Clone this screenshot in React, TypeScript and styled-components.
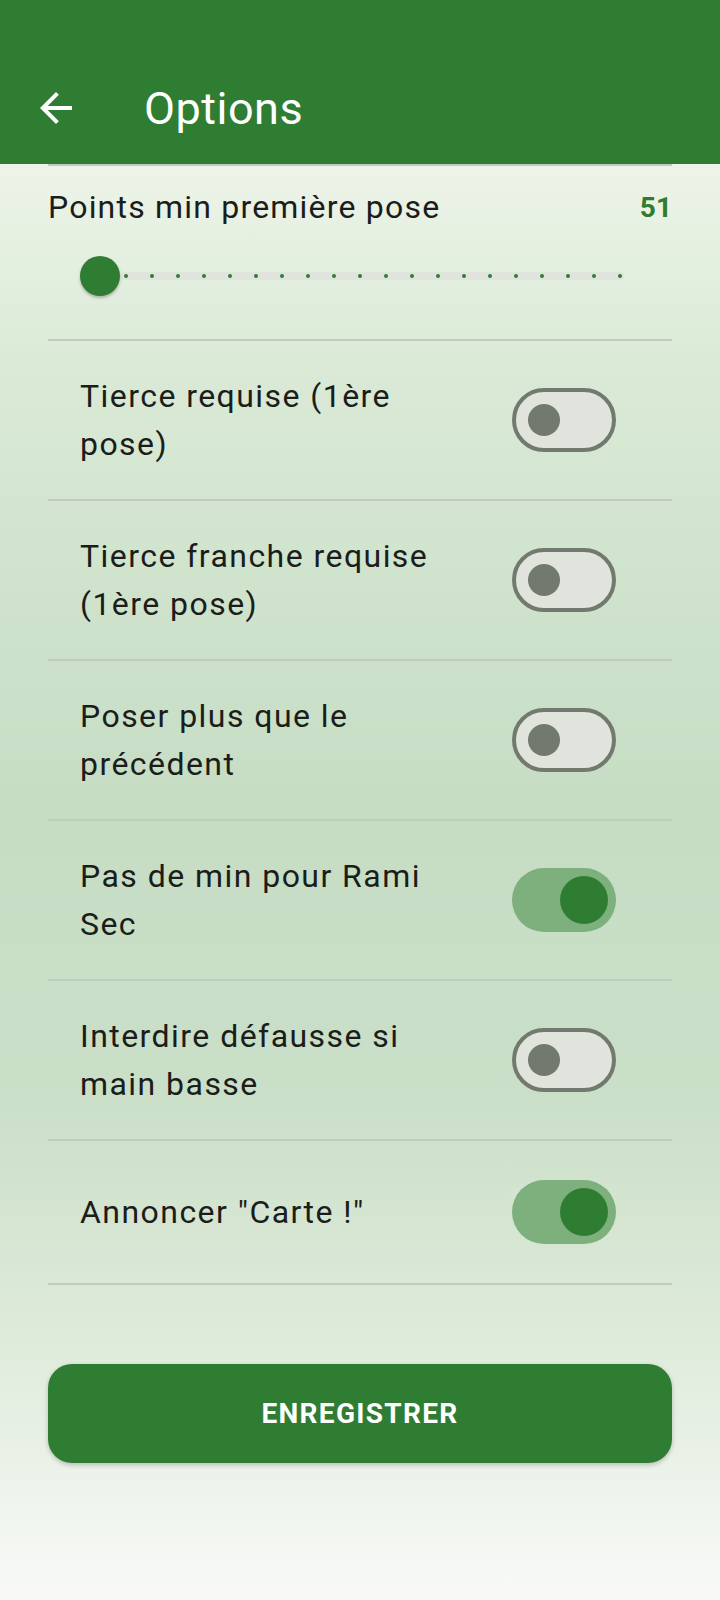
import styled, { createGlobalStyle } from "styled-components";

const GREEN = "#2e7d32";

const GlobalStyle = createGlobalStyle`
  body {
    margin: 0;
    font-family: Roboto, "Liberation Sans", sans-serif;
  }
`;

const options = [
  { label: "Tierce requise (1ère pose)", on: false },
  { label: "Tierce franche requise (1ère pose)", on: false },
  { label: "Poser plus que le précédent", on: false },
  { label: "Pas de min pour Rami Sec", on: true },
  { label: "Interdire défausse si main basse", on: false },
  { label: 'Annoncer "Carte !"', on: true },
];

function BackIcon() {
  return (
    <svg width="48" height="48" viewBox="0 0 24 24" fill="#fff">
      <path d="M20 11H7.83l5.59-5.59L12 4l-8 8 8 8 1.41-1.41L7.83 13H20v-2z" />
    </svg>
  );
}

function App() {
  const ticks = Array.from({ length: 21 }, (_, i) => i);

  return (
    <Page>
      <GlobalStyle />
      <Header>
        <Toolbar>
          <BackIcon />
          <Title>Options</Title>
        </Toolbar>
      </Header>

      <Content>
        <SliderSection>
          <SliderLabelRow>
            <SliderLabel>Points min première pose</SliderLabel>
            <SliderValue>51</SliderValue>
          </SliderLabelRow>
          <SliderWrap>
            <Track />
            <Ticks>
              {ticks.map((i) => (
                <Tick key={i} $hidden={i === 0} />
              ))}
            </Ticks>
            <Thumb />
          </SliderWrap>
        </SliderSection>

        {options.map((opt) => (
          <OptionRow key={opt.label}>
            <OptionText>{opt.label}</OptionText>
            <Switch $on={opt.on}>
              <SwitchThumb $on={opt.on} />
            </Switch>
          </OptionRow>
        ))}

        <SaveButton>ENREGISTRER</SaveButton>
      </Content>
    </Page>
  );
}

export default App;

const Page = styled.div`
  min-height: 1600px;
  display: flex;
  flex-direction: column;
  background: linear-gradient(
    to bottom,
    #f0f6eb 8%,
    #d9e9d5 24%,
    #c6ddc4 50%,
    #cadfc7 68%,
    #dfebdb 84%,
    #f9faf8 100%
  );
`;

const Header = styled.header`
  background: ${GREEN};
  padding-top: 52px;
`;

const Toolbar = styled.div`
  height: 112px;
  display: flex;
  align-items: center;
  padding-left: 32px;
`;

const Title = styled.h1`
  margin: 0 0 0 64px;
  color: #fff;
  font-size: 45px;
  font-weight: 400;
  letter-spacing: 0.5px;
`;

const Content = styled.main`
  padding: 0 48px;
  display: flex;
  flex-direction: column;
`;

const SliderSection = styled.section`
  border-top: 2px solid #c3cbc0;
  border-bottom: 2px solid #c3cbc0;
  padding-top: 17px;
  padding-bottom: 20px;
`;

const SliderLabelRow = styled.div`
  display: flex;
  justify-content: space-between;
  align-items: center;
  height: 48px;
`;

const SliderLabel = styled.div`
  font-size: 32px;
  color: #1b1d1a;
  letter-spacing: 1.2px;
`;

const SliderValue = styled.div`
  font-size: 28px;
  font-weight: 700;
  color: ${GREEN};
`;

const SliderWrap = styled.div`
  position: relative;
  height: 88px;
  margin: 0 32px;
`;

const Track = styled.div`
  position: absolute;
  left: 40px;
  right: 16px;
  top: 41px;
  height: 8px;
  border-radius: 4px;
  background: #e1e4dd;
`;

const Ticks = styled.div`
  position: absolute;
  left: 18px;
  right: 18px;
  top: 43px;
  display: flex;
  justify-content: space-between;
`;

const Tick = styled.span<{ $hidden: boolean }>`
  width: 4px;
  height: 4px;
  border-radius: 50%;
  background: ${GREEN};
  visibility: ${({ $hidden }) => ($hidden ? "hidden" : "visible")};
`;

const Thumb = styled.div`
  position: absolute;
  left: 0;
  top: 25px;
  width: 40px;
  height: 40px;
  border-radius: 50%;
  background: ${GREEN};
  box-shadow: 0 2px 3px rgba(0, 0, 0, 0.25);
`;

const OptionRow = styled.div`
  display: flex;
  align-items: center;
  justify-content: space-between;
  box-sizing: border-box;
  min-height: 144px;
  padding: 31px 56px 31px 32px;
  border-bottom: 2px solid #c3cbc0;
`;

const OptionText = styled.div`
  max-width: 366px;
  font-size: 32px;
  line-height: 48px;
  letter-spacing: 1.45px;
  color: #1b1d1a;
`;

const Switch = styled.div<{ $on: boolean }>`
  flex-shrink: 0;
  box-sizing: border-box;
  width: 104px;
  height: 64px;
  border-radius: 32px;
  display: flex;
  align-items: center;
  justify-content: ${({ $on }) => ($on ? "flex-end" : "flex-start")};
  padding: ${({ $on }) => ($on ? "0 8px" : "0 12px")};
  background: ${({ $on }) => ($on ? "#7db07c" : "#e0e4dc")};
  border: ${({ $on }) => ($on ? "none" : "4px solid #72796f")};
`;

const SwitchThumb = styled.div<{ $on: boolean }>`
  width: ${({ $on }) => ($on ? "48px" : "32px")};
  height: ${({ $on }) => ($on ? "48px" : "32px")};
  border-radius: 50%;
  background: ${({ $on }) => ($on ? GREEN : "#72796f")};
`;

const SaveButton = styled.button`
  margin-top: 79px;
  height: 99px;
  border: none;
  border-radius: 24px;
  background: ${GREEN};
  color: #fff;
  font-family: Roboto, "Liberation Sans", sans-serif;
  font-size: 28px;
  font-weight: 700;
  letter-spacing: 1.3px;
  box-shadow: 0 2px 5px rgba(0, 0, 0, 0.22);
  cursor: pointer;
`;
